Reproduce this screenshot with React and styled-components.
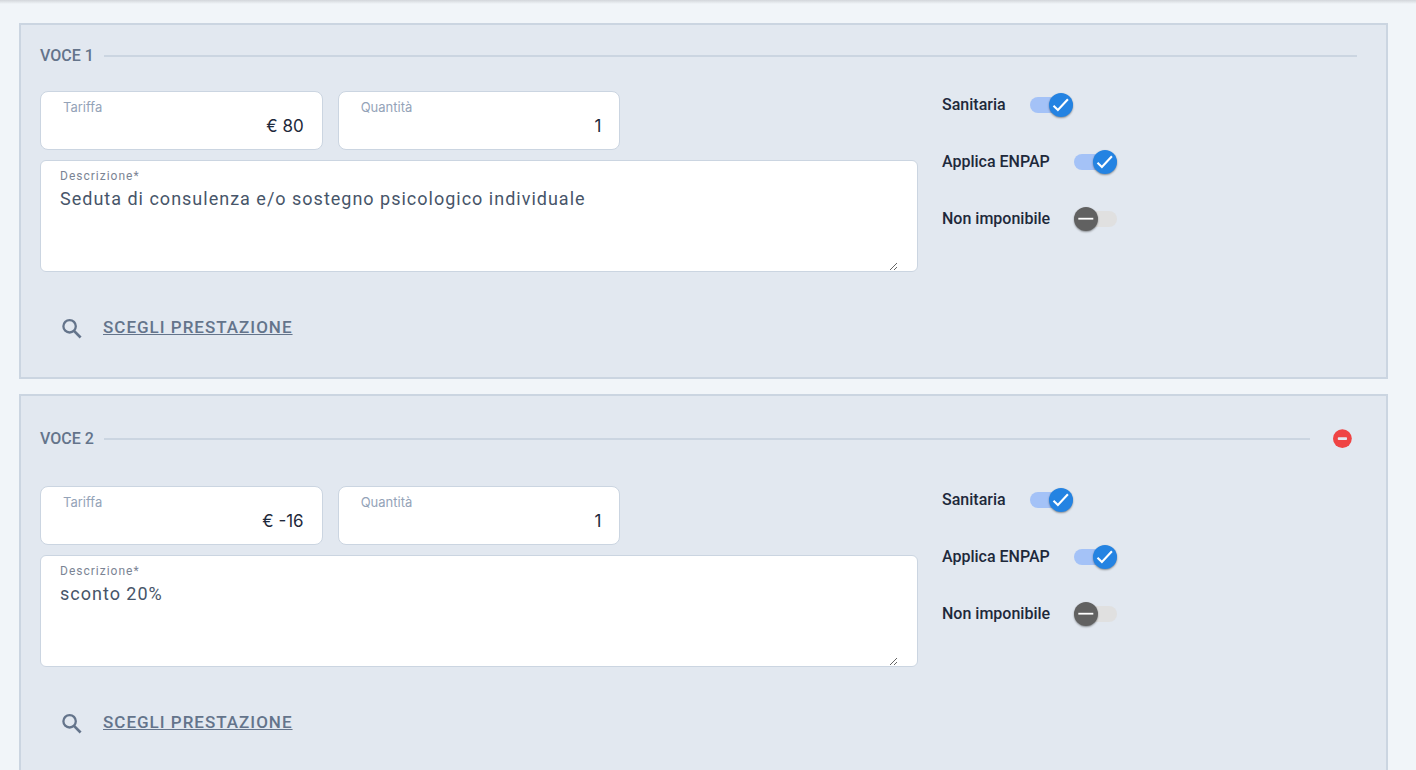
import React, { useState } from 'react';
import styled, { createGlobalStyle } from 'styled-components';

const initialItems = [
    {
        id: 1,
        price: '€ 80',
        quantity: '1',
        description: 'Seduta di consulenza e/o sostegno psicologico individuale',
        flags: { sanitaria: true, enpap: true, nonImponibile: false },
    },
    {
        id: 2,
        price: '€ -16',
        quantity: '1',
        description: 'sconto 20%',
        flags: { sanitaria: true, enpap: true, nonImponibile: false },
    },
];

const flagLabels = [
    { key: 'sanitaria', label: 'Sanitaria' },
    { key: 'enpap', label: 'Applica ENPAP' },
    { key: 'nonImponibile', label: 'Non imponibile' },
];

const CheckIcon = () => (
    <svg width="24" height="24" viewBox="0 0 24 24" fill="none" aria-hidden="true">
        <path d="M4.5 12.8l4.4 4.2L18.9 6.3" stroke="currentColor" strokeWidth="2.1" />
    </svg>
);

const DashIcon = () => (
    <svg width="24" height="24" viewBox="0 0 24 24" fill="none" aria-hidden="true">
        <path d="M4.3 11.7h15" stroke="currentColor" strokeWidth="1.8" />
    </svg>
);

const RemoveIcon = () => (
    <svg width="20" height="20" viewBox="0 0 20 20" aria-hidden="true">
        <circle cx="10.4" cy="9.6" r="9.4" fill="currentColor" />
        <rect x="5.8" y="8.2" width="9.2" height="2.8" rx="0.8" fill="#E2E8F0" />
    </svg>
);

const SearchIcon = () => (
    <svg width="26" height="26" viewBox="0 0 26 26" fill="none" stroke="currentColor" aria-hidden="true">
        <circle cx="10.6" cy="11.3" r="6.2" strokeWidth="2.3" />
        <path d="M15 15.9l6.6 6.6" strokeWidth="2.7" />
    </svg>
);

const Toggle = ({ label, defaultChecked }) => {
    const [checked, setChecked] = useState(defaultChecked);

    return (
        <ToggleLabel>
            {label}
            <Switch>
                <SwitchInput
                    type="checkbox"
                    role="switch"
                    checked={checked}
                    onChange={(e) => setChecked(e.target.checked)}
                />
                <Track $checked={checked} />
                <Thumb $checked={checked}>{checked ? <CheckIcon /> : <DashIcon />}</Thumb>
            </Switch>
        </ToggleLabel>
    );
};

const Item = ({ item, index, onRemove }) => {
    const removable = index > 0;

    return (
        <Card>
            <Header $removable={removable}>
                <Title>VOCE {index + 1}</Title>
                <Line />
                {removable && (
                    <RemoveButton type="button" aria-label="Rimuovi voce" onClick={onRemove}>
                        <RemoveIcon />
                    </RemoveButton>
                )}
            </Header>
            <Body>
                <Fields>
                    <FieldRow>
                        <Field>
                            <FieldLabel htmlFor={`price-${item.id}`}>Tariffa</FieldLabel>
                            <FieldInput id={`price-${item.id}`} defaultValue={item.price} />
                        </Field>
                        <Field>
                            <FieldLabel htmlFor={`quantity-${item.id}`}>Quantità</FieldLabel>
                            <FieldInput id={`quantity-${item.id}`} defaultValue={item.quantity} />
                        </Field>
                    </FieldRow>
                    <AreaField>
                        <AreaLabel htmlFor={`description-${item.id}`}>Descrizione*</AreaLabel>
                        <Area
                            id={`description-${item.id}`}
                            defaultValue={item.description}
                            spellCheck={false}
                        />
                    </AreaField>
                </Fields>
                <Toggles>
                    {flagLabels.map(({ key, label }) => (
                        <Toggle key={key} label={label} defaultChecked={item.flags[key]} />
                    ))}
                </Toggles>
            </Body>
            <ChooseButton type="button">
                <SearchIcon />
                <ChooseText>SCEGLI PRESTAZIONE</ChooseText>
            </ChooseButton>
        </Card>
    );
};

const App = () => {
    const [items, setItems] = useState(initialItems);

    const handleRemove = (id) => {
        setItems(items.filter((item) => item.id !== id));
    };

    return (
        <>
            <GlobalStyle />
            <Page>
                {items.map((item, index) => (
                    <Item
                        key={item.id}
                        item={item}
                        index={index}
                        onRemove={() => handleRemove(item.id)}
                    />
                ))}
            </Page>
        </>
    );
};

export default App;

const GlobalStyle = createGlobalStyle`
    *, *::before, *::after {
        box-sizing: border-box;
    }

    html {
        scrollbar-width: none;
    }

    body {
        margin: 0;
        background-color: #F1F5F9;
        font-family: Roboto, sans-serif;
        color: #1E293B;
    }

    button, input, textarea {
        font: inherit;
        color: inherit;
    }
`;

const Page = styled.main`
    min-height: 100vh;
    padding: 23px 28px 23px 19px;
    display: flex;
    flex-direction: column;
    gap: 15px;
    background: linear-gradient(#D3D6DB, #F1F5F9 4px);
`;

const Card = styled.section`
    padding: 19px 20px 25px 19px;
    background-color: #E2E8F0;
    border: 2px solid #CBD5E1;
`;

const Header = styled.header`
    margin-bottom: 23px;
    padding-right: ${({ $removable }) => ($removable ? '0' : '9px')};
    display: flex;
    align-items: center;
`;

const Title = styled.h2`
    margin: 0 10px 0 0;
    font-size: 16px;
    line-height: 24px;
    font-weight: 500;
    color: #64748B;
`;

const Line = styled.div`
    flex: 1;
    height: 2px;
    background-color: #CBD5E1;
`;

const RemoveButton = styled.button`
    width: 48px;
    height: 48px;
    margin-left: 8px;
    padding: 0;
    display: flex;
    justify-content: center;
    align-items: center;
    background: none;
    border: none;
    color: #EF4444;
    cursor: pointer;

    svg {
        overflow: visible;
    }
`;

const Body = styled.div`
    padding-right: 9px;
    display: grid;
    grid-template-columns: 2fr 1fr;
`;

const Fields = styled.div`
    display: flex;
    flex-direction: column;
    gap: 10px;
`;

const FieldRow = styled.div`
    display: grid;
    grid-template-columns: repeat(3, 1fr);
    gap: 15px;
`;

const Field = styled.div`
    padding: 7px 18px 12px 22px;
    display: flex;
    flex-direction: column;
    background-color: #FFFFFF;
    border: 1px solid #CBD5E1;
    border-radius: 8px;
`;

const FieldLabel = styled.label`
    font-family: Inter, sans-serif;
    font-size: 13px;
    line-height: 16px;
    color: #94A3B8;
`;

const FieldInput = styled.input`
    width: 100%;
    height: 22px;
    padding: 0;
    background: none;
    border: none;
    outline: none;
    font-family: Inter, sans-serif;
    font-size: 17px;
    text-align: right;
`;

const AreaField = styled.div`
    padding: 6px 19px 0;
    display: flex;
    flex-direction: column;
    background-color: #FFFFFF;
    border: 1px solid #CBD5E1;
    border-radius: 6px;
`;

const AreaLabel = styled.label`
    font-size: 12px;
    line-height: 18px;
    letter-spacing: 1px;
    color: #7B8494;
`;

const Area = styled.textarea`
    width: 100%;
    height: 86px;
    padding: 0;
    background: none;
    border: none;
    outline: none;
    resize: vertical;
    font-size: 18px;
    line-height: 27px;
    letter-spacing: 1px;
    color: #475569;
`;

const Toggles = styled.div`
    padding: 2px 0 0 24px;
    display: flex;
    flex-direction: column;
    align-items: flex-start;
    gap: 33px;
`;

const ToggleLabel = styled.label`
    display: flex;
    align-items: center;
    gap: 24px;
    font-size: 16px;
    line-height: 24px;
    font-weight: 500;
    cursor: pointer;
`;

const Switch = styled.span`
    position: relative;
    width: 43px;
    height: 24px;
    display: flex;
    align-items: center;
`;

const SwitchInput = styled.input`
    position: absolute;
    inset: 0;
    z-index: 1;
    width: 100%;
    height: 100%;
    margin: 0;
    opacity: 0;
    cursor: pointer;
`;

const Track = styled.span`
    width: 100%;
    height: 16px;
    border-radius: 8px;
    background-color: ${({ $checked }) => ($checked ? '#A4C2F7' : '#E0E0E0')};
`;

const Thumb = styled.span`
    position: absolute;
    top: 0;
    ${({ $checked }) => ($checked ? 'right: 0;' : 'left: 0;')}
    width: 24px;
    height: 24px;
    display: flex;
    justify-content: center;
    align-items: center;
    border-radius: 50%;
    background-color: ${({ $checked }) => ($checked ? '#2483E2' : '#616161')};
    box-shadow: 0 1px 2px rgba(0, 0, 0, 0.4);
    color: #FFFFFF;
`;

const ChooseButton = styled.button`
    height: 48px;
    margin-top: 32px;
    padding: 11px 19px;
    display: flex;
    align-items: flex-start;
    gap: 18px;
    background: none;
    border: none;
    color: #64748B;
    cursor: pointer;
`;

const ChooseText = styled.span`
    font-size: 17px;
    line-height: 24px;
    font-weight: 500;
    letter-spacing: 1px;
    text-decoration: underline;
`;
